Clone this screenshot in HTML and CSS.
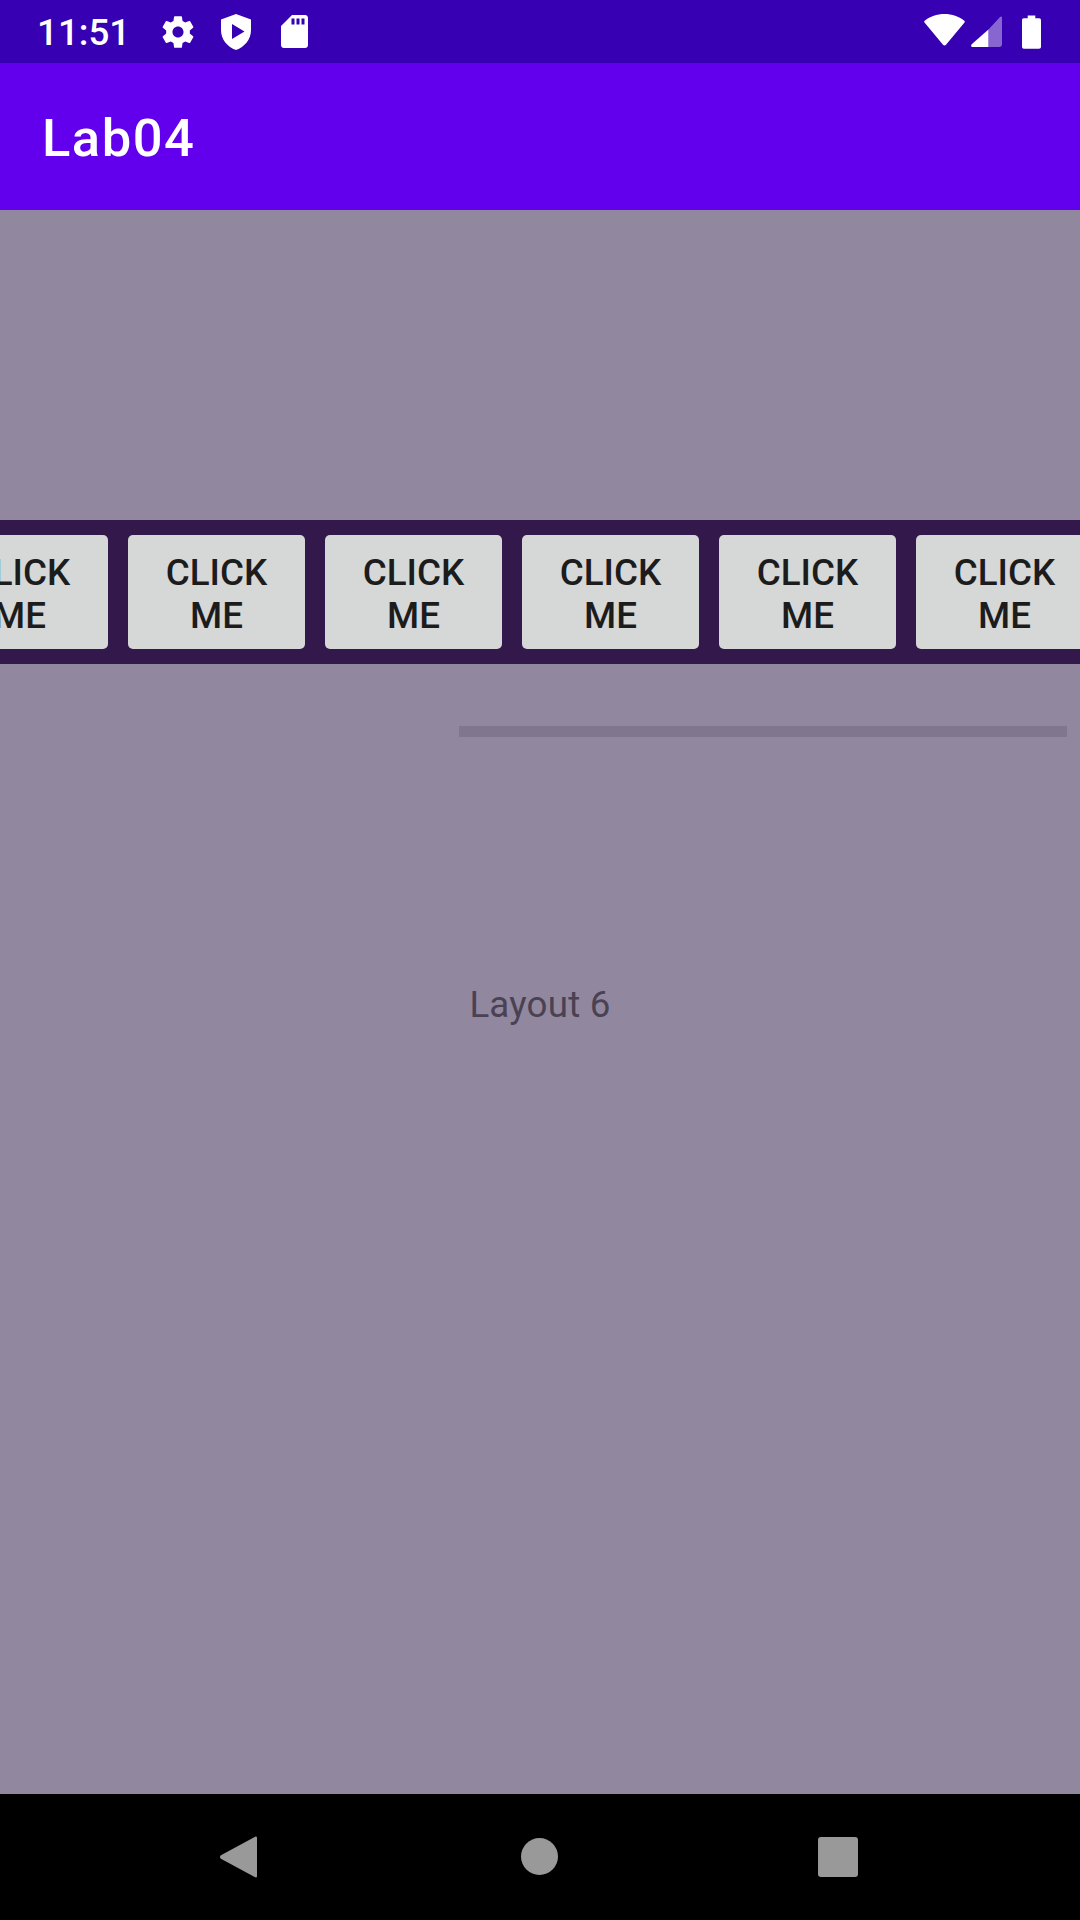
FILE: index.html
```html
<!DOCTYPE html>
<html lang="en">
<head>
<meta charset="UTF-8">
<meta name="viewport" content="width=device-width, initial-scale=1.0">
<title>Lab04</title>
<link rel="stylesheet" href="styles.css">
</head>
<body>

<div class="status-bar">
    <span class="clock">11:51</span>
    <svg class="icon-gear" viewBox="0 0 24 24"><path d="M19.43 12.98c.04-.32.07-.64.07-.98s-.03-.66-.07-.98l2.11-1.65c.19-.15.24-.42.12-.64l-2-3.46c-.12-.22-.39-.3-.61-.22l-2.49 1c-.52-.4-1.08-.73-1.69-.98l-.38-2.65C14.46 2.18 14.25 2 14 2h-4c-.25 0-.46.18-.49.42l-.38 2.65c-.61.25-1.17.59-1.69.98l-2.49-1c-.23-.09-.49 0-.61.22l-2 3.46c-.13.22-.07.49.12.64l2.11 1.65c-.04.32-.07.65-.07.98s.03.66.07.98l-2.11 1.65c-.19.15-.24.42-.12.64l2 3.46c.12.22.39.3.61.22l2.49-1c.52.4 1.08.73 1.69.98l.38 2.65c.03.24.24.42.49.42h4c.25 0 .46-.18.49-.42l.38-2.65c.61-.25 1.17-.59 1.69-.98l2.49 1c.23.09.49 0 .61-.22l2-3.46c.12-.22.07-.49-.12-.64l-2.11-1.65zM12 15.5c-1.93 0-3.5-1.57-3.5-3.5s1.57-3.5 3.5-3.5 3.5 1.57 3.5 3.5-1.57 3.5-3.5 3.5z"/></svg>
    <svg class="icon-shield" viewBox="0 0 30 36"><path fill-rule="evenodd" d="M15 0 L30 5.5 V16 C30 25.500 23.500 33 15 36 C6.500 33 0 25.500 0 16 V5.500 Z M11 10 V25 L23.500 17.500 Z"/></svg>
    <svg class="icon-sd" viewBox="0 0 27 33"><path fill-rule="evenodd" d="M11 0 H24 C25.700 0 27 1.300 27 3 V30 C27 31.700 25.700 33 24 33 H3 C1.300 33 0 31.700 0 30 V11 Z M10.500 3.500 V9.500 H13.500 V3.500 Z M15.500 3.500 V9.500 H18.500 V3.500 Z M20.500 3.500 V9.500 H23.500 V3.500 Z"/></svg>
    <div class="status-right">
        <svg class="icon-wifi" viewBox="0 0 41 32"><path d="M20.500 0 C28 0 35 2.500 40 6.500 C41 7.300 41 8 40.300 8.800 L22 30.800 C21.200 31.800 19.800 31.800 19 30.800 L0.700 8.800 C0 8 0 7.300 1 6.500 C6 2.500 13 0 20.500 0 Z"/></svg>
        <svg class="icon-signal" viewBox="0 0 32 32">
            <path class="signal-off" d="M18 14 L30 1 C31 0 32 .5 32 2 V29 C32 31 31 32 29 32 H18 Z"/>
            <path d="M18 14 V32 H2 C0 32 -.5 30.500 1 29 Z"/>
        </svg>
        <svg class="icon-battery" viewBox="0 0 20 35"><path d="M6 0 H14 V3 H18 C19.200 3 20 3.800 20 5 V33 C20 34.200 19.200 35 18 35 H2 C.8 35 0 34.200 0 33 V5 C0 3.800 .8 3 2 3 H6 Z"/></svg>
    </div>
</div>

<div class="app-bar"><span class="app-title">Lab04</span></div>

<div class="content">
    <div class="button-strip">
        <div class="button-row">
            <button class="click-btn"><span class="btn-text">Click me</span></button>
            <button class="click-btn"><span class="btn-text">Click me</span></button>
            <button class="click-btn"><span class="btn-text">Click me</span></button>
            <button class="click-btn"><span class="btn-text">Click me</span></button>
            <button class="click-btn"><span class="btn-text">Click me</span></button>
            <button class="click-btn"><span class="btn-text">Click me</span></button>
        </div>
    </div>
    <div class="progress-track"></div>
    <p class="layout-label">Layout 6</p>
</div>

<div class="nav-bar">
    <svg class="nav-back" viewBox="0 0 40 44"><path d="M38 0 C39.200 -.6 40 .2 40 1.500 V42.500 C40 43.800 39.200 44.500 38 44 L1 24 C-.3 23 -.3 21 1 20 Z"/></svg>
    <div class="nav-home"></div>
    <div class="nav-recent"></div>
</div>

</body>
</html>
```

FILE: styles.css
```css
* {
    box-sizing: border-box;
}
html, body {
    margin: 0;
    height: 100%;
}
body {
    width: 1080px;
    height: 1920px;
    overflow: hidden;
    display: flex;
    flex-direction: column;
    font-family: Roboto, "Liberation Sans", sans-serif;
    background-color: #9188a0;
}

/* status bar */
.status-bar {
    height: 63px;
    flex: none;
    display: flex;
    align-items: center;
    padding-left: 37px;
    background-color: #3700b3;
    color: white;
}
.status-bar svg {
    display: block;
    fill: white;
}
.clock {
    width: 92px;
    padding-top: 2px;
    font-size: 36.75px;
    font-weight: 500;
}
.icon-gear {
    width: 38px;
    height: 38px;
    margin-left: 30px;
}
.icon-shield {
    width: 30px;
    height: 36px;
    margin-left: 24px;
}
.icon-sd {
    width: 27px;
    height: 33px;
    margin-left: 30px;
}
.status-right {
    margin-left: auto;
    display: flex;
    align-items: center;
    padding-right: 39px;
}
.icon-wifi {
    width: 41px;
    height: 32px;
    margin-bottom: 4px;
}
.icon-signal {
    width: 31px;
    height: 31px;
    margin-left: 6px;
}
.signal-off {
    opacity: 0.4;
}
.icon-battery {
    width: 19px;
    height: 34px;
    margin-left: 20px;
}

/* app bar */
.app-bar {
    height: 147px;
    flex: none;
    display: flex;
    align-items: center;
    padding-left: 42px;
    background-color: #6200ee;
    color: white;
    font-size: 52.5px;
    font-weight: 500;
    letter-spacing: 1.5px;
}
.app-title {
    padding-top: 3px;
}

/* main area */
.content {
    flex: 1;
    overflow: hidden;
    padding-top: 310px;
}
.button-strip {
    height: 144px;
    overflow: hidden;
    padding: 15px 0;
    background-color: #33194b;
}
.button-row {
    display: flex;
    gap: 20px;
    margin-left: -69px;
}
.click-btn {
    width: 177px;
    height: 114px;
    flex: none;
    padding: 0 30px;
    border: none;
    border-radius: 5px;
    background-color: #d6d8d7;
    color: #1c1c1c;
    font-family: inherit;
    font-size: 36.75px;
    font-weight: 500;
    line-height: 43px;
    text-transform: uppercase;
}
.btn-text {
    display: block;
    padding-top: 3px;
}
.progress-track {
    width: 608px;
    height: 11px;
    margin: 62px 0 0 459px;
    background-color: #80768d;
}
.layout-label {
    margin: 246px 0 0;
    text-align: center;
    font-size: 36.75px;
    letter-spacing: 0.2px;
    line-height: 43px;
    color: #4a4253;
}

/* nav bar */
.nav-bar {
    height: 126px;
    flex: none;
    position: relative;
    background-color: black;
}
.nav-back {
    position: absolute;
    left: 220px;
    top: 42px;
    width: 37px;
    height: 42px;
    fill: #999999;
}
.nav-home {
    position: absolute;
    left: 521px;
    top: 44px;
    width: 37px;
    height: 37px;
    border-radius: 50%;
    background-color: #999999;
}
.nav-recent {
    position: absolute;
    left: 818px;
    top: 43px;
    width: 40px;
    height: 40px;
    border-radius: 3px;
    background-color: #999999;
}
```
